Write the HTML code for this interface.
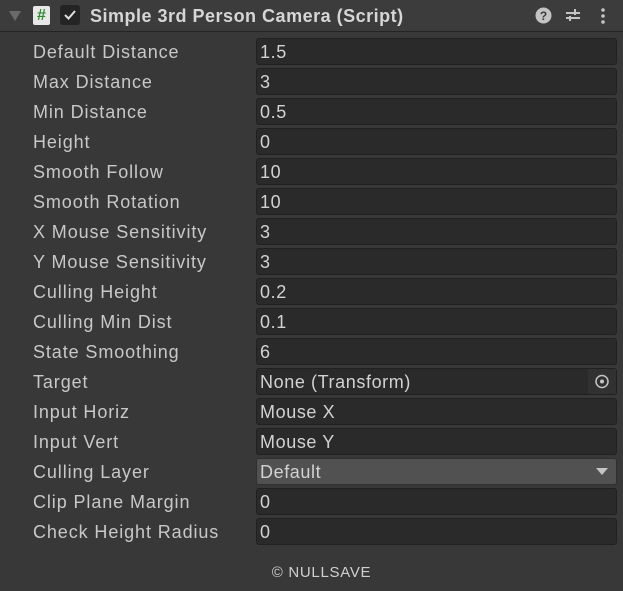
<!DOCTYPE html>
<html><head><style>
body{margin:0;width:623px;height:591px;background:#383838;font-family:"Liberation Sans",sans-serif;overflow:hidden;position:relative}
.hdr{position:absolute;left:0;top:0;width:623px;height:31px;background:#3c3c3c;border-bottom:1px solid #242424}
.row{position:absolute;left:0;width:623px;height:30px}
.lbl{position:absolute;left:33px;top:5px;font-size:18px;color:#c8c8c8;letter-spacing:0.9px}
.fld{position:absolute;left:256px;top:1px;width:356px;height:25px;background:#2a2a2a;border:1px solid #212121;border-radius:3px;color:#d2d2d2;font-size:18px;line-height:27px;padding-left:3px;box-sizing:content-box;letter-spacing:0.6px}
.dd{background:#515151;border-color:#303030}
</style></head><body>
<div class="hdr">
<svg style="position:absolute;left:8px;top:10px" width="14" height="12"><path d="M1 1 L13 1 L7 11Z" fill="#6a6a6a"/></svg>
<div style="position:absolute;left:33px;top:6px;width:17px;height:19px;background:#e8e8e8;border-radius:2px;color:#2e8b2e;font-weight:bold;font-size:16px;text-align:center;line-height:19px">#</div>
<div style="position:absolute;left:60px;top:5px;width:20px;height:20px;background:#242424;border-radius:3px"><svg width="20" height="20"><path d="M5 10 L8.5 13.5 L15 6" stroke="#e0e0e0" stroke-width="2" fill="none"/></svg></div>
<div style="position:absolute;left:90px;top:6px;font-size:18px;font-weight:bold;color:#d6d6d6;letter-spacing:0.5px">Simple 3rd Person Camera (Script)</div>
<svg style="position:absolute;left:535px;top:7px" width="17" height="17"><circle cx="8.5" cy="8.5" r="8" fill="#c4c4c4"/><text x="8.5" y="13" text-anchor="middle" font-size="12" font-weight="bold" fill="#3c3c3c" font-family="Liberation Sans">?</text></svg>
<svg style="position:absolute;left:565px;top:7px" width="16" height="16"><path d="M1 6H15M1 11H15" stroke="#c4c4c4" stroke-width="2"/><path d="M10 2V8M5 9V14" stroke="#c4c4c4" stroke-width="2"/></svg>
<svg style="position:absolute;left:600px;top:7px" width="6" height="18"><circle cx="3" cy="3" r="1.8" fill="#c4c4c4"/><circle cx="3" cy="9" r="1.8" fill="#c4c4c4"/><circle cx="3" cy="15" r="1.8" fill="#c4c4c4"/></svg>
</div>

<div class="row" style="top:37px"><div class="lbl">Default Distance</div><div class="fld">1.5</div></div>
<div class="row" style="top:67px"><div class="lbl">Max Distance</div><div class="fld">3</div></div>
<div class="row" style="top:97px"><div class="lbl">Min Distance</div><div class="fld">0.5</div></div>
<div class="row" style="top:127px"><div class="lbl">Height</div><div class="fld">0</div></div>
<div class="row" style="top:157px"><div class="lbl">Smooth Follow</div><div class="fld">10</div></div>
<div class="row" style="top:187px"><div class="lbl">Smooth Rotation</div><div class="fld">10</div></div>
<div class="row" style="top:217px"><div class="lbl">X Mouse Sensitivity</div><div class="fld">3</div></div>
<div class="row" style="top:247px"><div class="lbl">Y Mouse Sensitivity</div><div class="fld">3</div></div>
<div class="row" style="top:277px"><div class="lbl">Culling Height</div><div class="fld">0.2</div></div>
<div class="row" style="top:307px"><div class="lbl">Culling Min Dist</div><div class="fld">0.1</div></div>
<div class="row" style="top:337px"><div class="lbl">State Smoothing</div><div class="fld">6</div></div>
<div class="row" style="top:367px"><div class="lbl">Target</div><div class="fld">None (Transform)<div style="position:absolute;right:0;top:0;width:28px;height:25px;background:#313131"><svg width="28" height="25"><circle cx="14" cy="12.5" r="6" stroke="#c4c4c4" stroke-width="1.5" fill="none"/><circle cx="14" cy="12.5" r="2" fill="#c4c4c4"/></svg></div></div></div>
<div class="row" style="top:397px"><div class="lbl">Input Horiz</div><div class="fld">Mouse X</div></div>
<div class="row" style="top:427px"><div class="lbl">Input Vert</div><div class="fld">Mouse Y</div></div>
<div class="row" style="top:457px"><div class="lbl">Culling Layer</div><div class="fld dd">Default<svg style="position:absolute;right:8px;top:9px" width="12" height="8"><path d="M0 0H12L6 7Z" fill="#c4c4c4"/></svg></div></div>
<div class="row" style="top:487px"><div class="lbl">Clip Plane Margin</div><div class="fld">0</div></div>
<div class="row" style="top:517px"><div class="lbl">Check Height Radius</div><div class="fld">0</div></div>
<div style="position:absolute;left:0;width:643px;top:564px;text-align:center;font-size:15px;color:#d0d0d0;letter-spacing:0.7px">© NULLSAVE</div>
</body></html>
